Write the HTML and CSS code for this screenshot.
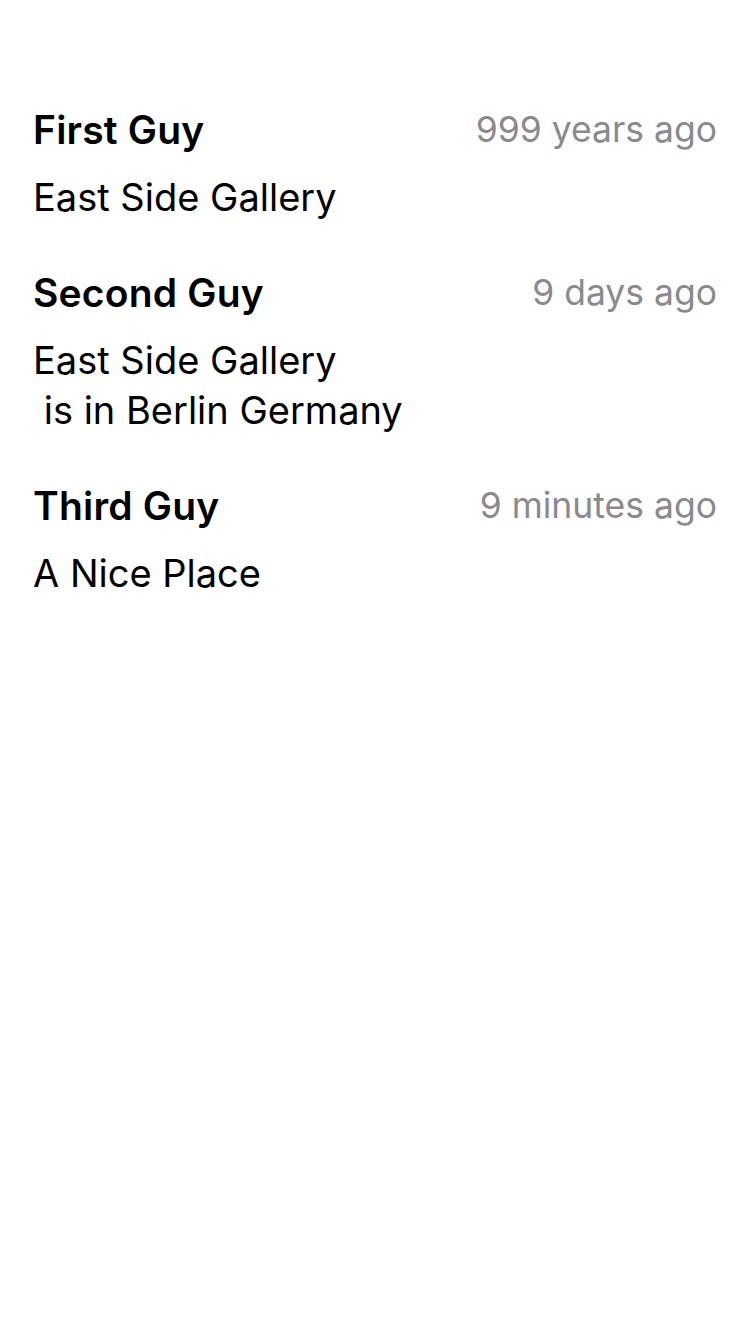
FILE: index.html
```html
<!DOCTYPE html>
<html>
<head>
<meta charset="utf-8">
<link rel="stylesheet" href="styles.css">
</head>
<body>
<div class="list">
  <div class="item">
    <div class="head"><span class="name">First Guy</span><span class="time">999 years ago</span></div>
    <div class="text">East Side Gallery</div>
  </div>
  <div class="item">
    <div class="head"><span class="name">Second Guy</span><span class="time">9 days ago</span></div>
    <div class="text">East Side Gallery
 is in Berlin Germany</div>
  </div>
  <div class="item">
    <div class="head"><span class="name">Third Guy</span><span class="time">9 minutes ago</span></div>
    <div class="text">A Nice Place</div>
  </div>
</div>
</body>
</html>
```

FILE: styles.css
```css
html, body {
  margin: 0;
  padding: 0;
  background: #ffffff;
}
body {
  font-family: Inter, "Liberation Sans", sans-serif;
  color: #000;
  width: 750px;
  height: 1334px;
}
.list {
  padding: 105px 33px 0 33px;
  display: flex;
  flex-direction: column;
  gap: 46px;
}
.item {
  display: flex;
  flex-direction: column;
  gap: 17px;
}
.head {
  display: flex;
  justify-content: space-between;
  align-items: center;
  line-height: 50px;
}
.name {
  font-size: 39px;
  font-weight: 600;
  letter-spacing: 0.2px;
}
.time {
  font-size: 35.5px;
  color: #8a8a8e;
}
.text {
  font-size: 38px;
  line-height: 50px;
  white-space: pre;
}
```
